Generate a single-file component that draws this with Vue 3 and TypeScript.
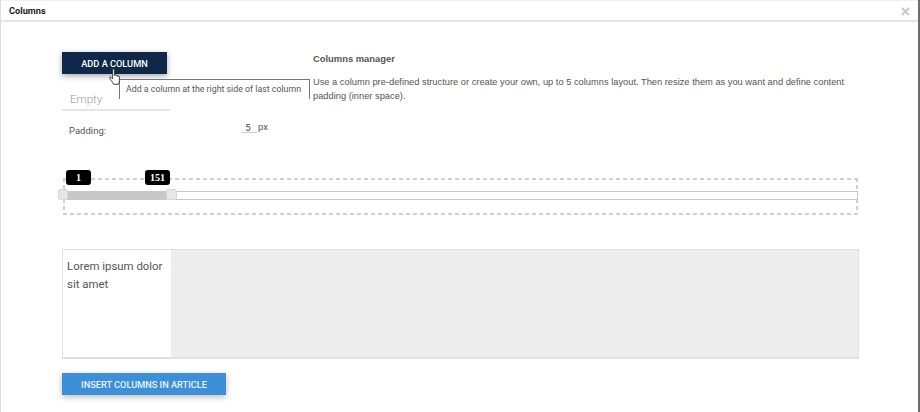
<script setup lang="ts">
const title: string = 'Columns'
</script>

<template>
  <div class="win">
    <header class="head">
      <span class="title">{{ title }}</span>
      <svg class="close" width="9" height="9" viewBox="0 0 9 9"><path d="M1 1l7 7M8 1l-7 7" stroke="#c9c9c9" stroke-width="2.2" fill="none" /></svg>
    </header>
    <main class="body">
      <section class="top">
        <div class="left">
          <div class="addwrap">
            <button class="btn dark">ADD A COLUMN</button>
            <div class="tip">Add a column at the right side of last column</div>
            <svg class="hand" width="13" height="19" viewBox="0 0 13 18" preserveAspectRatio="none">
              <path d="M3.6 1.8c0-1.2 1.8-1.2 1.8 0v5.2c0-1 1.700-1 1.700 0v.6c0-1 1.700-1 1.700 0v.6c0-1 1.600-.9 1.600.1v3.700c0 1.600-.6 2.300-1 3.400H4.500c-.6-1.400-1.300-2.200-2.400-3.700L.9 9.900c-.7-1 .5-1.900 1.300-1.100l1.400 1.500z" fill="#fff" stroke="#333" stroke-width=".9" stroke-linejoin="round" />
            </svg>
          </div>
          <div class="tab">Empty</div>
          <div class="pad">
            <span class="padlabel">Padding:</span>
            <span class="padval">5</span>
            <span class="padunit">px</span>
          </div>
        </div>
        <div class="info">
          <h3>Columns manager</h3>
          <p>Use a column pre-defined structure or create your own, up to 5 columns layout. Then resize them as you want and define content padding (inner space).</p>
        </div>
      </section>
      <section class="slider">
        <div class="track">
          <div class="fill"></div>
          <span class="knob k1"></span>
          <span class="knob k2"></span>
          <span class="tag t1">1</span>
          <span class="tag t2">151</span>
        </div>
      </section>
      <section class="preview">
        <div class="col">Lorem ipsum dolor sit amet</div>
        <div class="rest"></div>
      </section>
      <button class="btn blue">INSERT COLUMNS IN ARTICLE</button>
    </main>
  </div>
</template>

<style scoped>
.win {
  position: relative;
  box-sizing: border-box;
  width: 920px;
  height: 412px;
  overflow: hidden;
  background: #fff;
  font-family: Roboto, "Liberation Sans", sans-serif;
  color: #555;
  border-right: 2px solid #6e6e6e;
  border-left: 1px solid #ddd;
}
.head {
  box-sizing: border-box;
  height: 22px;
  display: flex;
  align-items: center;
  justify-content: space-between;
  padding: 0 8px 0 8px;
  border-top: 1px solid #f0f0f0;
  border-bottom: 2px solid #e6e6e6;
}
.title {
  font-size: 9.2px;
  font-weight: 700;
  color: #222;
}
.close {
  margin-top: 1px;
}
.body {
  padding: 30px 59px 0 61px;
}
.top {
  display: flex;
  height: 117px;
}
.left {
  width: 251px;
}
.addwrap {
  position: relative;
  height: 22px;
}
.btn {
  display: block;
  box-sizing: border-box;
  height: 22px;
  border: 0;
  padding: 0;
  font-family: inherit;
  font-size: 9.2px;
  font-weight: 500;
  color: #fff;
}
.dark {
  width: 105px;
  background: #0f2748;
  box-shadow: 0 2px 6px rgba(0, 0, 0, 0.35);
}
.blue {
  width: 164px;
  margin-top: 14px;
  background: #3d8fd8;
  color: #eaf3fb;
  box-shadow: 0 2px 6px rgba(0, 0, 0, 0.28);
}
.tip {
  position: absolute;
  left: 57px;
  top: 27px;
  box-sizing: border-box;
  width: 191px;
  height: 20px;
  padding: 4px 0 0 6px;
  border: solid #777;
  border-width: 1px 1px 0 1px;
  background: #fff;
  font-size: 8.8px;
  white-space: nowrap;
  color: #555;
}
.hand {
  position: absolute;
  left: 47px;
  top: 16px;
}
.tab {
  box-sizing: border-box;
  width: 108px;
  height: 37px;
  padding: 18px 0 0 8px;
  border-bottom: 2px solid #e5e5e5;
  font-size: 11.5px;
  font-weight: 300;
  color: #999;
}
.pad {
  display: flex;
  height: 24px;
  align-items: flex-start;
  margin-top: 10px;
  font-size: 9.5px;
}
.padlabel {
  width: 173px;
  padding: 4px 0 0 7px;
}
.padval {
  box-sizing: border-box;
  width: 15px;
  height: 12px;
  padding: 1px 3px 0 0;
  text-align: center;
  border-bottom: 1px solid #ccc;
  color: #444;
}
.padunit {
  margin-left: 1px;
}
.info {
  font-family: "Liberation Sans", Arial, sans-serif;
  font-size: 9.3px;
  line-height: 14px;
  color: #555;
}
.info h3 {
  margin: 0;
  font-size: 9.4px;
  line-height: 14px;
  font-weight: 700;
  color: #555;
}
.info p {
  margin: 9px 0 0;
  width: 545px;
}
.slider {
  box-sizing: border-box;
  height: 37px;
  width: 795px;
  margin-left: 1px;
  margin-top: 9px;
  padding-top: 13px;
  background:
    repeating-linear-gradient(90deg, #cfcfcf 0 4px, transparent 4px 7px) left top / 100% 2px no-repeat,
    repeating-linear-gradient(90deg, #cfcfcf 0 4px, transparent 4px 7px) left bottom / 100% 2px no-repeat,
    repeating-linear-gradient(180deg, #cfcfcf 0 4px, transparent 4px 7px) left top / 2px 100% no-repeat,
    repeating-linear-gradient(180deg, #cfcfcf 0 4px, transparent 4px 7px) right top / 2px 100% no-repeat;
}
.track {
  position: relative;
  box-sizing: border-box;
  height: 9px;
  border: 1px solid #c8c8c8;
  background: #fff;
}
.fill {
  width: 104px;
  height: 100%;
  background: #c8c8c8;
}
.knob {
  position: absolute;
  top: -3px;
  width: 11px;
  height: 11px;
  box-sizing: border-box;
  background: #e6e6e6;
  border: 1px solid #d8d8d8;
  border-radius: 2px;
}
.k1 {
  left: -6px;
  width: 10px;
}
.k2 {
  left: 102px;
}
.tag {
  position: absolute;
  top: -22px;
  height: 15px;
  line-height: 15px;
  border-radius: 3px;
  background: #000;
  color: #fff;
  text-align: center;
  font-family: "Liberation Serif", serif;
  font-size: 10px;
  font-weight: 700;
}
.t1 {
  left: 2px;
  width: 25px;
}
.t2 {
  left: 81px;
  width: 25px;
}
.preview {
  display: flex;
  box-sizing: border-box;
  height: 110px;
  width: 797px;
  margin-top: 34px;
  border: 1px solid #e0e0e0;
  border-width: 1px 1px 2px 1px;
}
.col {
  box-sizing: border-box;
  width: 108px;
  padding: 7px 4px;
  font-size: 11.4px;
  line-height: 18px;
  color: #555;
}
.rest {
  flex: 1;
  background: conic-gradient(#e8e8e8 25%, #f3f3f3 0 50%, #e8e8e8 0 75%, #f3f3f3 0) 0 0 / 2px 2px;
}
</style>
